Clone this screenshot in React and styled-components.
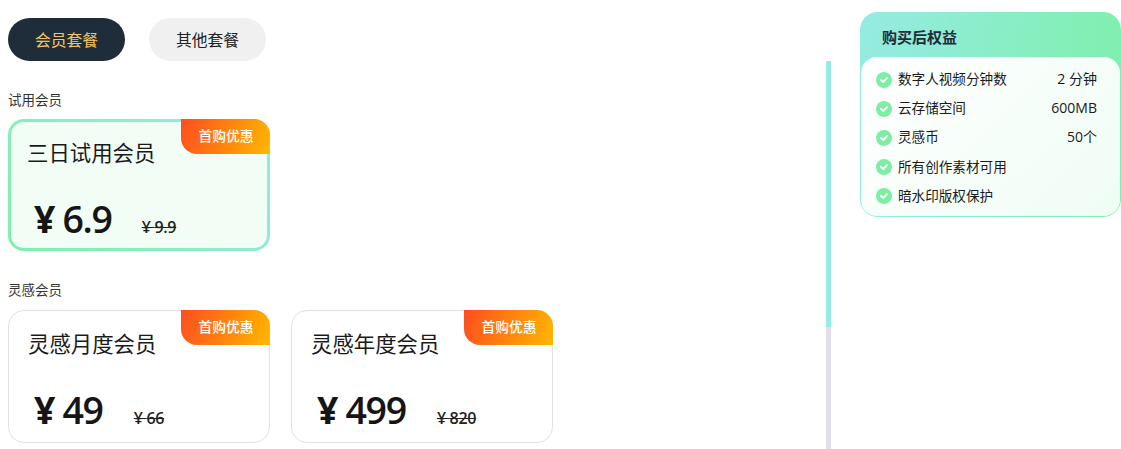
import React from 'react'
import styled, { createGlobalStyle } from 'styled-components'

const GlobalStyle = createGlobalStyle`
  html, body {
    margin: 0;
    height: 449px;
    overflow: hidden;
    background: #fff;
    font-family: "Open Sans", "Noto Sans CJK SC", sans-serif;
    color: #1a1a1a;
  }
`

const Page = styled.div`
  display: flex;
  width: 1121px;
  height: 449px;
  overflow: hidden;
`

const Left = styled.div`
  width: 831px;
  display: flex;
  flex-direction: column;
`

const Tabs = styled.div`
  display: flex;
  gap: 24px;
  padding: 18px 0 0 8px;
  height: 43px;
`

const Tab = styled.div`
  width: 117px;
  height: 43px;
  border-radius: 22px;
  display: flex;
  align-items: center;
  justify-content: center;
  font-size: 15.8px;
  background: ${({ $active }) => ($active ? '#1f2d3a' : '#f0f0f0')};
  color: ${({ $active }) => ($active ? '#f5c55e' : '#222')};
`

const Body = styled.div`
  flex: 1;
  display: flex;
  min-height: 0;
`

const List = styled.div`
  flex: 1;
  padding: 30px 0 0 8px;
`

const SectionTitle = styled.div`
  font-size: 13.5px;
  line-height: 18px;
  height: 18px;
  color: #333;
`

const Row = styled.div`
  display: flex;
  gap: 21px;
  margin: ${({ $top }) => $top}px 0 30px;
`

const Card = styled.div`
  position: relative;
  box-sizing: border-box;
  width: 262px;
  height: ${({ $selected }) => ($selected ? '132px' : '133px')};
  border-radius: 16px;
  padding: ${({ $selected }) => ($selected ? '16px 0 0 16px' : '18px 0 0 19px')};
  border: ${({ $selected }) => ($selected ? '3px solid transparent' : '1px solid #e2e2e2')};
  background: ${({ $selected }) =>
    $selected
      ? 'linear-gradient(#f2fdf6, #f2fdf6) padding-box, linear-gradient(45deg, #7df0a8, #95ebe3) border-box'
      : '#fff'};
`

const Badge = styled.div`
  position: absolute;
  top: ${({ $selected }) => ($selected ? '-3px' : '-1px')};
  right: ${({ $selected }) => ($selected ? '-3px' : '-1px')};
  width: 89px;
  height: 35px;
  border-radius: 0 16px 0 16px;
  background: linear-gradient(110deg, #ff4d1f, #ffb800);
  color: #fff;
  font-size: 13.8px;
  font-weight: 500;
  display: flex;
  align-items: center;
  justify-content: center;
  padding: 0 0 4px 1px;
  box-sizing: border-box;
`

const CardName = styled.div`
  font-size: 21.4px;
  line-height: 30px;
  color: #1a1a1a;
`

const Prices = styled.div`
  display: flex;
  align-items: baseline;
  margin: 25px 0 0 ${({ $offset }) => $offset}px;
`

const Price = styled.div`
  font-size: 37.5px;
  line-height: 52px;
  font-weight: 600;
  color: #151515;
  letter-spacing: -1.3px;
`

const Currency = styled.span`
  font-weight: 700;
  margin-right: 7px;
  letter-spacing: 0;
`

const OldPrice = styled.div`
  margin-left: ${({ $gap }) => $gap}px;
  font-size: 16px;
  font-weight: 600;
  color: #222;
  text-decoration: line-through;
  letter-spacing: -0.3px;
`

const ScrollTrack = styled.div`
  width: 5px;
  background: #e0dfea;
`

const ScrollThumb = styled.div`
  height: 266px;
  background: #95ebe5;
  border-radius: 2px 2px 0 0;
`

const Panel = styled.div`
  box-sizing: border-box;
  width: 261px;
  height: 205px;
  margin: 12px 0 0 29px;
  border-radius: 18px;
  background: linear-gradient(100deg, #95ebe3, #7df0a8);
  padding: 0 0 1px;
  display: flex;
  flex-direction: column;
`

const PanelTitle = styled.div`
  height: 45px;
  line-height: 50px;
  padding-left: 22px;
  font-size: 15px;
  font-weight: 600;
  color: #1f2d3a;
`

const PanelBody = styled.div`
  flex: 1;
  margin: 0 1px;
  border-radius: 16px;
  background: linear-gradient(135deg, #ffffff, #effdf5);
  padding: 8px 23px 0 15px;
`

const Benefit = styled.div`
  display: flex;
  align-items: center;
  height: 29.2px;
  font-size: 13.6px;
  color: #1a1a1a;
`

const CheckBadge = styled.svg`
  width: 16px;
  height: 16px;
  margin-right: 6px;
  flex: none;
`

const BenefitLabel = styled.span`
  margin-bottom: 3px;
`

const BenefitValue = styled.span`
  margin: 0 0 3px auto;
  font-size: 14px;
`

const Check = () => (
  <CheckBadge viewBox="0 0 16 16">
    <circle cx="8" cy="8" r="8" fill="#7eeea6" />
    <path d="M4.8 7.8 7.2 10l4-4" fill="none" stroke="#fff" strokeWidth="1.8" strokeLinecap="round" strokeLinejoin="round" />
  </CheckBadge>
)

const benefits = [
  { label: '数字人视频分钟数', value: '2 分钟' },
  { label: '云存储空间', value: '600MB' },
  { label: '灵感币', value: '50个' },
  { label: '所有创作素材可用' },
  { label: '暗水印版权保护' },
]

const PlanCard = ({ name, price, old, gap, selected }) => (
  <Card $selected={selected}>
    <Badge $selected={selected}>首购优惠</Badge>
    <CardName>{name}</CardName>
    <Prices $offset={selected ? 7 : 6}>
      <Price><Currency>¥</Currency>{price}</Price>
      <OldPrice $gap={gap}>¥ {old}</OldPrice>
    </Prices>
  </Card>
)

export default function App() {
  return (
    <Page>
      <GlobalStyle />
      <Left>
        <Tabs>
          <Tab $active>会员套餐</Tab>
          <Tab>其他套餐</Tab>
        </Tabs>
        <Body>
          <List>
            <SectionTitle>试用会员</SectionTitle>
            <Row $top={10}>
              <PlanCard selected name="三日试用会员" price="6.9" old="9.9" gap={30} />
            </Row>
            <SectionTitle>灵感会员</SectionTitle>
            <Row $top={11}>
              <PlanCard name="灵感月度会员" price="49" old="66" gap={31} />
              <PlanCard name="灵感年度会员" price="499" old="820" gap={31} />
            </Row>
          </List>
          <ScrollTrack>
            <ScrollThumb />
          </ScrollTrack>
        </Body>
      </Left>
      <Panel>
        <PanelTitle>购买后权益</PanelTitle>
        <PanelBody>
          {benefits.map((b) => (
            <Benefit key={b.label}>
              <Check />
              <BenefitLabel>{b.label}</BenefitLabel>
              {b.value && <BenefitValue>{b.value}</BenefitValue>}
            </Benefit>
          ))}
        </PanelBody>
      </Panel>
    </Page>
  )
}
